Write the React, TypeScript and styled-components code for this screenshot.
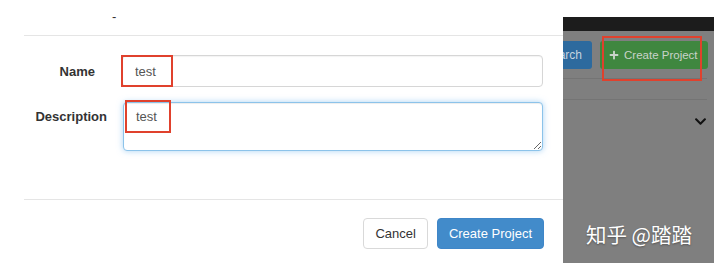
import React from "react";
import styled, { createGlobalStyle } from "styled-components";
import { FaChevronDown, FaPlus } from "react-icons/fa";

const GlobalStyle = createGlobalStyle`
  html, body {
    margin: 0;
    background: #fff;
  }
  body {
    font-family: "Liberation Sans", Arial, sans-serif;
    font-size: 13px;
    color: #333;
  }
`;

const Page = styled.div`
  display: flex;
  width: 723px;
  height: 263px;
  overflow: hidden;
  position: relative;
`;

const Modal = styled.div`
  margin-left: 24px;
  width: 539px;
  display: flex;
  flex-direction: column;
  background: #fff;
`;

const Header = styled.div`
  height: 36px;
  box-sizing: border-box;
  border-bottom: 1px solid #e5e5e5;
  padding: 8px 0 0 88px;
`;

const Title = styled.span`
  font-size: 13px;
  line-height: 18px;
  color: #333;
`;

const Body = styled.div`
  display: grid;
  grid-template-columns: 98px 1fr;
  row-gap: 15px;
  padding: 19px 20px 48px 0;
`;

const Label = styled.label<{ $inset: number; $top?: boolean }>`
  justify-self: end;
  align-self: ${(p) => (p.$top ? "start" : "center")};
  padding-right: ${(p) => p.$inset}px;
  padding-top: ${(p) => (p.$top ? 7 : 0)}px;
  font-weight: bold;
  font-size: 13px;
  color: #333;
`;

const Field = styled.div<{ $shift?: number }>`
  position: relative;
  margin-left: ${(p) => p.$shift ?? 0}px;
`;

const TextInput = styled.input`
  display: block;
  width: 100%;
  height: 32px;
  box-sizing: border-box;
  padding: 6px 12px;
  font-family: inherit;
  font-size: 13px;
  color: #555;
  background: #fff;
  border: 1px solid #d6d6d6;
  border-radius: 4px;
  box-shadow: inset 0 1px 1px rgba(0, 0, 0, 0.05);
  outline: none;
`;

const TextArea = styled.textarea`
  display: block;
  width: 100%;
  height: 49px;
  box-sizing: border-box;
  padding: 6px 12px;
  font-family: inherit;
  font-size: 13px;
  color: #555;
  background: #fff;
  border: 1px solid #8cc3ea;
  border-radius: 4px;
  box-shadow: inset 0 1px 1px rgba(0, 0, 0, 0.075),
    0 0 6px rgba(102, 175, 233, 0.55);
  outline: none;
  resize: vertical;
`;

const Mark = styled.div<{ $left: number; $top: number; $w: number; $h: number }>`
  position: absolute;
  left: ${(p) => p.$left}px;
  top: ${(p) => p.$top}px;
  width: ${(p) => p.$w}px;
  height: ${(p) => p.$h}px;
  box-sizing: border-box;
  border: 2px solid #e0412d;
  pointer-events: none;
`;

const Footer = styled.div`
  border-top: 1px solid #e5e5e5;
  display: flex;
  justify-content: flex-end;
  gap: 9px;
  padding: 18px 19px 0 0;
`;

const Button = styled.button<{ $primary?: boolean }>`
  height: 31px;
  padding: 0 11px;
  font-family: inherit;
  font-size: 13px;
  border-radius: 4px;
  border: 1px solid ${(p) => (p.$primary ? "#3f86c8" : "#d9d9d9")};
  background: ${(p) => (p.$primary ? "#428bca" : "#fff")};
  color: ${(p) => (p.$primary ? "#fff" : "#333")};
`;

const Backdrop = styled.div`
  margin-top: 17px;
  width: 151px;
  display: flex;
  flex-direction: column;
  background: #7f7f7f;
  overflow: hidden;
`;

const DarkBar = styled.div`
  height: 14px;
  background: #1c1c1c;
`;

const Toolbar = styled.div`
  display: flex;
  gap: 8px;
  height: 48px;
  box-sizing: border-box;
  padding-top: 10px;
  margin-right: 7px;
  border-bottom: 1px solid #747474;
`;

const ToolButton = styled.div<{ $tone: "blue" | "green"; $shift?: number }>`
  position: relative;
  height: 28px;
  display: flex;
  align-items: center;
  gap: 5px;
  padding: 0 10px 0 ${(p) => (p.$tone === "green" ? 9 : 10)}px;
  margin-left: ${(p) => p.$shift ?? 0}px;
  border-radius: 3px;
  font-size: ${(p) => (p.$tone === "green" ? 11.5 : 12)}px;
  white-space: nowrap;
  background: ${(p) => (p.$tone === "blue" ? "#2d6a9e" : "#3f873f")};
  color: ${(p) => (p.$tone === "blue" ? "#c5d3df" : "#c9d3c9")};
`;

const Spacer = styled.div`
  height: 20px;
  margin-right: 7px;
  border-bottom: 1px solid #747474;
`;

const PanelRow = styled.div`
  display: flex;
  justify-content: flex-end;
  padding: 15px 7px 0 0;
  color: #111;
`;

const Gutter = styled.div`
  flex: 1;
  background: #fff;
`;

const Watermark = styled.div`
  position: absolute;
  left: 586px;
  top: 219px;
  font-family: "Noto Sans CJK SC", "Liberation Sans", sans-serif;
  font-size: 20.5px;
  color: #fff;
  text-shadow: 0 1px 2px rgba(0, 0, 0, 0.35);
  white-space: nowrap;
`;

export default function App() {
  return (
    <>
      <GlobalStyle />
      <Page>
        <Modal>
          <Header>
            <Title>-</Title>
          </Header>
          <Body>
            <Label $inset={27}>Name</Label>
            <Field>
              <TextInput defaultValue="test" />
              <Mark $left={-1} $top={0} $w={52} $h={32} />
            </Field>
            <Label $inset={15} $top>
              Description
            </Label>
            <Field $shift={1}>
              <TextArea defaultValue="test" />
              <Mark $left={2} $top={-2} $w={46} $h={33} />
            </Field>
          </Body>
          <Footer>
            <Button>Cancel</Button>
            <Button $primary>Create Project</Button>
          </Footer>
        </Modal>
        <Backdrop>
          <DarkBar />
          <Toolbar>
            <ToolButton $tone="blue" $shift={-29}>
              Search
            </ToolButton>
            <ToolButton $tone="green">
              <FaPlus size={10} />
              Create Project
              <Mark $left={2} $top={-5} $w={100} $h={45} />
            </ToolButton>
          </Toolbar>
          <Spacer />
          <PanelRow>
            <FaChevronDown size={13} />
          </PanelRow>
        </Backdrop>
        <Gutter />
        <Watermark>知乎 @踏踏</Watermark>
      </Page>
    </>
  );
}
